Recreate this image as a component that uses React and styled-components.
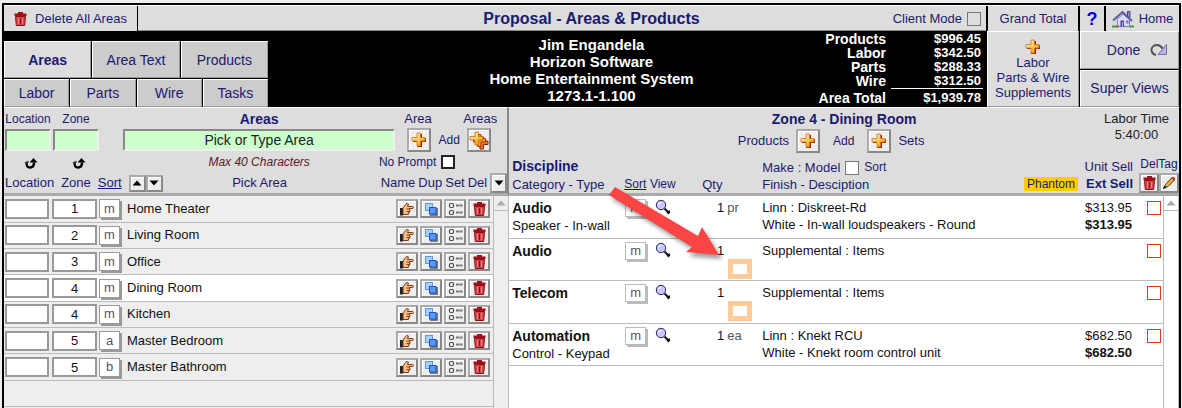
import React, { useState } from "react";
import styled, { createGlobalStyle, css } from "styled-components";

const areas = [
  { zone: "1", sort: "m", name: "Home Theater" },
  { zone: "2", sort: "m", name: "Living Room" },
  { zone: "3", sort: "m", name: "Office" },
  { zone: "4", sort: "m", name: "Dining Room", selected: true },
  { zone: "4", sort: "m", name: "Kitchen" },
  { zone: "5", sort: "a", name: "Master Bedroom" },
  { zone: "5", sort: "b", name: "Master Bathroom" },
];

const products = [
  { discipline: "Audio", category: "Speaker - In-wall", qty: "1", unit: "pr", make: "Linn : Diskreet-Rd", finish: "White - In-wall loudspeakers - Round", price: "$313.95" },
  { discipline: "Audio", qty: "1", make: "Supplemental : Items", supplement: true },
  { discipline: "Telecom", qty: "1", make: "Supplemental : Items", supplement: true },
  { discipline: "Automation", category: "Control - Keypad", qty: "1", unit: "ea", make: "Linn : Knekt RCU", finish: "White - Knekt room control unit", price: "$682.50" },
];

const totals = [
  ["Products", "$996.45"],
  ["Labor", "$342.50"],
  ["Parts", "$288.33"],
  ["Wire", "$312.50"],
];

/* ---------- icons ---------- */

const PlusIcon = () => (
  <svg width="16" height="16" viewBox="0 0 16 16" aria-hidden="true">
    <defs>
      <linearGradient id="gold" x1="0" y1="0" x2="1" y2="1">
        <stop offset="0.2" stopColor="#ffe9a0" />
        <stop offset="0.8" stopColor="#f5a800" />
      </linearGradient>
    </defs>
    <path d="M7 2h4v4h4v4h-4v5H6v-5H2V9h5z" fill="#a01c10" />
    <path d="M6 1h3.500v4.500H14V9H9.500v5H6V9H1V5.500h5z" fill="url(#gold)" stroke="#d0702c" strokeWidth="0.8" />
  </svg>
);

const PlusesIcon = () => (
  <svg width="20" height="19" viewBox="0 0 20 19" aria-hidden="true">
    <path d="M11 6h3.500v4H19v3.500h-4.500V18H11v-4.500H7V10h4z" fill="#e08020" stroke="#a01c10" />
    <path d="M8.500 3.500H12v4h4.500V11H12v4.500H8.500V11h-4V7.500h4z" fill="#f0a030" stroke="#b02c10" />
    <path d="M6 1h3.500v4.500H14V9H9.500v5H6V9H1V5.500h5z" fill="url(#gold)" stroke="#c8641e" strokeWidth="0.8" />
  </svg>
);

const TrashIcon = () => (
  <svg width="13" height="14" viewBox="0 0 13 14" aria-hidden="true">
    <path d="M4 0h5v1.500h3.500V4H.5V1.500H4z" fill="#a01018" />
    <path d="M1.500 4.500h10l-.8 9H2.300z" fill="#d2484c" stroke="#8e0c14" />
    <path d="M4.500 6v6M8.500 6v6" stroke="#e88080" />
    <path d="M6.500 6v6" stroke="#8e0c14" />
  </svg>
);

const HandIcon = () => (
  <svg width="14" height="14" viewBox="0 0 14 14" aria-hidden="true">
    <path d="M0 6h3v7.500H0z" fill="#222" />
    <path d="M3 6 6.500 1.500l2 .5L7.500 4.500h5.200c1 0 1 2 0 2H9.500V8h.5v1.500h-.8V11h-.8v1.500H3z" fill="#f6c08c" stroke="#7a3b14" />
    <path d="M6.500 7h3M6.500 9.500h2.500" stroke="#7a3b14" />
  </svg>
);

const CopyIcon = () => (
  <svg width="14" height="14" viewBox="0 0 14 14" aria-hidden="true">
    <rect x="1.500" y="1.500" width="7" height="7" fill="#a8d0fa" stroke="#5a9ae6" />
    <path d="M13 6v7H6" fill="none" stroke="#555" strokeWidth="1.500" />
    <rect x="5.500" y="5.500" width="6.500" height="6.500" fill="#5c98fc" stroke="#1d54c8" />
  </svg>
);

const SetIcon = () => (
  <svg width="15" height="14" viewBox="0 0 15 14" aria-hidden="true">
    <rect x="1.500" y="1.500" width="4" height="4" rx="1.500" fill="#fff" stroke="#444" strokeWidth="1.200" />
    <rect x="1.500" y="8.500" width="4" height="4" rx="1.500" fill="#fff" stroke="#444" strokeWidth="1.200" />
    <path d="M8 3.500h3m.5 0h3M8 10.500h3m.5 0h3" stroke="#777" strokeWidth="2" />
  </svg>
);

const SearchIcon = () => (
  <svg width="16" height="16" viewBox="0 0 16 16" aria-hidden="true">
    <path d="m9.500 9.500 4 4" stroke="#111" strokeWidth="2" />
    <path d="m11.500 13.500 3-2.500.8 2.500-2 2z" fill="#111" />
    <circle cx="6" cy="6" r="4.700" fill="#c8c8ff" stroke="#22224a" />
    <path d="M3.500 5.500q.5-1.800 2.500-2" fill="none" stroke="#fff" />
  </svg>
);

const HouseIcon = () => (
  <svg width="22" height="18" viewBox="0 0 22 18" aria-hidden="true">
    <path d="M15.500 1.500h2.500v6h-2.500z" fill="#8a8ac8" stroke="#444480" />
    <path d="M5 9.500 11 4l6.500 5.500v7H6z" fill="#dcdcff" stroke="#7a7ab8" />
    <path d="M1 10.500 10.500 2l9.500 9" fill="none" stroke="#5a5a98" strokeWidth="1.800" />
    <path d="M8.500 10.500H12V17H8.500z" fill="#4a4a98" />
    <path d="M10 12h1v5h-1z" fill="#b0b0e8" />
    <path d="M14 10.500h2.500v3H14z" fill="#7a7ad8" />
    <path d="M0 16.500h5M17.500 16.500H22" stroke="#3aa03a" strokeWidth="2" />
    <path d="M4.500 16.500h2" stroke="#d84020" strokeWidth="2" />
  </svg>
);

const DoneIcon = () => (
  <svg width="18" height="14" viewBox="0 0 18 14" aria-hidden="true">
    <path d="M6 12C1.500 11 .5 6.500 2.500 4s7-3.500 10.500 2" fill="none" stroke="#555" strokeWidth="2" />
    <path d="M16.500 1.500v10H8z" fill="#b4b4f0" stroke="#7070a0" />
  </svg>
);

const PencilIcon = () => (
  <svg width="14" height="14" viewBox="0 0 14 14" aria-hidden="true">
    <path d="m2.500 11.500 1-3L10 1.500l2.500 2.500L6 10.500z" fill="#f0b440" stroke="#4a2c10" />
    <path d="m9.500 2 1-1q1-.5 2 .5t.5 2l-1 1z" fill="#c03c30" />
    <path d="m1 13 1-3.500 2.500 2.500z" fill="#111" />
  </svg>
);

const TurnIcon = () => (
  <svg width="14" height="12" viewBox="0 0 14 12" aria-hidden="true">
    <path d="M2.500 4.500c0 4 1 5 3.500 5s4-1 4-5" fill="none" stroke="#000" strokeWidth="2.500" />
    <path d="M5.500 4.500 9.500 0l4 4.500z" fill="#000" />
    <path d="M0 4.500h4.500V3z" fill="#000" />
  </svg>
);

const Triangle = ({ down, color = "#000" }) => (
  <svg width="10" height="6" viewBox="0 0 10 6" aria-hidden="true">
    <path d={down ? "M.5.500h9L5 5.500z" : "M.5 5.500h9L5 .5z"} fill={color} />
  </svg>
);

/* ---------- styles ---------- */

const GlobalStyle = createGlobalStyle`
  * { box-sizing: border-box; }
  body {
    margin: 0;
    background: #eee;
    color: #111;
    font: 13px/16px "Liberation Sans", Arial, sans-serif;
  }
  button, input { font: inherit; color: inherit; margin: 0; padding: 0; border-radius: 0; }
`;

const bevel = css`
  border: 1px solid;
  border-color: #fff #999 #999 #fff;
`;

const Page = styled.div`
  display: flex;
  flex-direction: column;
  min-height: 100vh;
  margin: 0 1px 0 2px;
  padding-top: 3px;
`;

const Frame = styled.main`
  flex: 1;
  display: flex;
  flex-direction: column;
  border: 2px solid #000;
  border-bottom: 0;
  color: #1a1a70;
`;

const TopBar = styled.header`
  display: grid;
  grid-template-columns: 1fr auto 1fr;
  height: 26px;
  background: #ddd;
  border-top: 1px solid #fff;
  border-bottom: 1px solid #888;
`;

const Title = styled.h1`
  margin: 0;
  font-size: 16px;
  line-height: 26px;
`;

const Side = styled.div`
  display: flex;
  justify-content: ${(p) => (p.$end ? "flex-end" : "flex-start")};
`;

const BarButton = styled.button`
  display: flex;
  align-items: center;
  justify-content: center;
  gap: ${(p) => p.$gap || "8px"};
  width: ${(p) => p.$width};
  background: #ddd;
  border: 0;
  border-right: ${(p) => (p.$first ? "1px solid #000" : "0")};
  border-left: ${(p) => (p.$first ? "0" : "2px solid #000")};
  font-size: ${(p) => p.$size || "13px"};
  font-weight: ${(p) => p.$weight || 400};
  color: ${(p) => p.$color || "inherit"};
`;

const Check = styled.input.attrs({ type: "checkbox" })`
  appearance: none;
  flex: none;
  width: 14px;
  height: 14px;
  border: ${(p) => p.$border || "1px solid #777"};
  background: ${(p) => p.$fill || "#fff"};
  &:checked { background: #1a1a70; }
`;

const CheckLabel = styled.label`
  display: flex;
  align-items: center;
  gap: 5px;
  margin-right: ${(p) => p.$space || "0"};
  white-space: nowrap;
`;

const Banner = styled.section`
  display: grid;
  grid-template-columns: 1fr auto 1fr;
  height: 76px;
  background: #000;
  color: #fff;
  font-weight: 700;
`;

const Tabs = styled.nav`
  width: 264px;
  padding-top: 10px;
  display: grid;
  grid-template-rows: 37px 28px;
  gap: 1px;
`;

const TabRow = styled.div`
  display: flex;
  gap: 1px;
`;

const Tab = styled.button`
  ${bevel}
  flex: 1;
  background: ${(p) => (p.$active ? "#ddd" : "#ccc")};
  color: #1a1a70;
  font-size: 14px;
  font-weight: ${(p) => (p.$active ? 700 : 400)};
`;

const Client = styled.div`
  padding-top: 5px;
  text-align: center;
  font-size: 15px;
  line-height: 17px;
`;

const Totals = styled.table`
  align-self: flex-start;
  margin-right: 4px;
  border-collapse: collapse;
  font-size: 14px;
  line-height: 14px;
  text-align: right;
  th, td { padding: 0; }
  td { width: 92px; padding-right: 2px; font-size: 13px; }
  th { padding-right: 5px; }
  tbody tr:first-child > * { padding-top: 1px; }
  tfoot th { padding-top: 2px; }
  tfoot td { padding-top: 2px; border-top: 1px solid #fff; }
`;

const Supplements = styled.button`
  ${bevel}
  display: flex;
  flex-direction: column;
  align-items: center;
  justify-content: center;
  width: 92px;
  background: #ddd;
  color: #1a1a70;
  font-weight: 400;
  line-height: 15px;
`;

const NavStack = styled.div`
  display: grid;
  grid-template-rows: 1fr 1fr;
  gap: 1px;
  width: 100px;
  padding-left: 1px;
`;

const NavButton = styled.button`
  ${bevel}
  display: flex;
  align-items: center;
  justify-content: center;
  gap: 10px;
  padding-left: ${(p) => (p.$icon ? "16px" : "0")};
  background: #ddd;
  color: #1a1a70;
  font-size: 14px;
  font-weight: 400;
`;

const Columns = styled.div`
  flex: 1;
  display: grid;
  grid-template-columns: 43fr 57fr;
`;

const Panel = styled.section`
  position: relative;
  display: flex;
  flex-direction: column;
  min-width: 0;
  background: ${(p) => p.$fill};
`;

const PanelHead = styled.div`
  height: 89px;
  background: #ddd;
  border-top: 1px solid #fff;
  border-bottom: 3px solid #aaa;
  border-right: ${(p) => (p.$divided ? "2px solid #888" : "0")};
  display: flex;
  flex-direction: column;
  justify-content: space-between;
`;

const HeadRow = styled.div`
  display: flex;
  align-items: center;
  height: ${(p) => p.$height};
  padding-left: 1px;
`;

const HeadStart = styled.div`
  display: flex;
  align-items: center;
  gap: ${(p) => p.$gap || "2px"};
  width: ${(p) => p.$width || "118px"};
`;

const HeadMiddle = styled.div`
  flex: 1;
  text-align: center;
  white-space: nowrap;
`;

const HeadEnd = styled.div`
  display: flex;
  align-items: center;
  justify-content: ${(p) => p.$justify || "space-between"};
  gap: ${(p) => p.$gap || "0"};
  width: ${(p) => p.$width || "112px"};
  padding: ${(p) => p.$pad || "0 16px 0 12px"};
`;

const Slot = styled.span`
  width: 46px;
  display: flex;
  justify-content: center;
  padding: 4px 0 0 6px;
`;

const SlotLabel = styled.label`
  width: 46px;
  text-align: center;
  font-size: 12px;
`;

const Strong = styled.h2`
  margin: 0;
  font-size: 14px;
  line-height: 18px;
`;

const Small = styled.span`
  font-size: 12px;
`;

const Hint = styled.em`
  font-size: 12px;
  color: #5a2020;
`;

const GreenInput = styled.input`
  width: ${(p) => p.$width || "100%"};
  height: 22px;
  border: 2px solid;
  border-color: #888 #eee #eee #888;
  background: #cfc;
  color: #111;
  text-align: center;
  font-size: 14px;
  &::placeholder { color: #222; opacity: 1; }
`;

const IconButton = styled.button`
  display: flex;
  flex: none;
  align-items: center;
  justify-content: center;
  width: ${(p) => p.$width || "24px"};
  height: ${(p) => p.$height || "24px"};
  background: #eee;
  border: 2px solid;
  border-color: #aaa #888 #888 #aaa;
  box-shadow: inset 1px 1px #fff;
`;

const SortLink = styled.a`
  color: inherit;
  font-size: ${(p) => (p.$small ? "12px" : "13px")};
  text-decoration: underline;
`;

const Buttons = styled.div`
  display: flex;
  gap: ${(p) => p.$gap || "0"};
`;

const ListBody = styled.div`
  flex: 1;
  display: flex;
`;

const Scroller = styled.div`
  flex: 1;
  min-width: 0;
`;

const ScrollBar = styled.div`
  width: 16px;
  border: 1px solid #bbb;
  border-width: 0 1px;
  background: ${(p) => p.$fill};
`;

const ScrollButton = styled.button`
  display: flex;
  align-items: center;
  justify-content: center;
  width: 100%;
  height: 15px;
  background: none;
  border: 0;
  border-bottom: 1px solid #bbb;
`;

const DataTable = styled.table`
  width: 100%;
  height: ${(p) => p.$height};
  border-collapse: collapse;
  table-layout: fixed;
  color: #111;
  td { padding: 0; white-space: nowrap; }
`;

const AreaRow = styled.tr`
  height: 26px;
  background: ${(p) => (p.$selected ? "#fff" : "#eee")};
  border-bottom: 1px solid #bbb;
`;

const RowInput = styled.input`
  display: block;
  width: ${(p) => p.$width};
  height: 20px;
  margin-left: 1px;
  border: 2px solid #999;
  background: #fff;
  text-align: center;
`;

const SortButton = styled.button`
  display: block;
  width: 21px;
  height: ${(p) => (p.$pale ? "18px" : "19px")};
  background: #fff;
  border: 1px solid ${(p) => (p.$pale ? "#bbb" : "#999")};
  box-shadow: 2px 2px ${(p) => (p.$pale ? "#bbb" : "#999")};
  color: #555;
  line-height: 14px;
`;

const HeadGrid = styled.div`
  display: grid;
  grid-template-columns: 1fr auto 1fr;
`;

const AddRow = styled.div`
  display: flex;
  align-items: center;
  gap: 7px;
  margin: 1px 26px 0 0;
`;

const AddText = styled(Small)`
  margin: 0 6px;
`;

const Center = styled.div`
  grid-column: 2;
  display: flex;
  flex-direction: column;
  align-items: center;
  padding-top: 2px;
`;

const LaborTime = styled.div`
  justify-self: end;
  padding: 3px 10px 0 0;
  color: #222;
  text-align: center;
`;

const ProductHead = styled.div`
  display: flex;
  align-items: flex-end;
  line-height: 17px;
  padding-left: 3px;
`;

const ProductCol = styled.div`
  flex: ${(p) => (p.$width ? "none" : 1)};
  width: ${(p) => p.$width || "auto"};
  text-align: ${(p) => p.$align || "left"};
  white-space: nowrap;
`;

const Discipline = styled.div`
  height: 18px;
  font-size: 14px;
  font-weight: 700;
`;

const Phantom = styled.span`
  padding: 0 3px;
  margin-right: 8px;
  background: #fc0;
  font-size: 12px;
`;

const TagTools = styled.div`
  display: flex;
  flex-direction: column;
  align-items: center;
  width: 40px;
  margin-left: 6px;
`;

const ProductRow = styled.tr`
  height: 42px;
  border-bottom: 1px solid #bbb;
  line-height: 18px;
  td { vertical-align: top; padding-top: 3px; }
  td:first-child { padding-left: 3px; }
`;

const Line = styled.div`
  height: 17px;
`;

const Qty = styled.span`
  display: inline-block;
  width: 41px;
  text-align: right;
`;

const Unit = styled.span`
  margin-left: 3px;
  color: #555;
`;

const SupplementCheck = styled(Check)`
  display: block;
  width: 24px;
  height: 20px;
  margin-left: 45px;
  border: 5px solid #fc9;
`;

const Price = styled.td`
  text-align: right;
`;

const TagCheck = styled(Check)`
  display: block;
  margin: 2px 2px 0 auto;
  border: 1px solid #d04010;
`;

const PointerArrow = styled.svg`
  position: absolute;
  left: 94px;
  top: 72px;
  pointer-events: none;
  filter: drop-shadow(3px 4px 2px rgba(0, 0, 0, 0.4));
`;

/* ---------- page parts ---------- */

const Head = () => (
  <>
    <TopBar>
      <Side>
        <BarButton $first $width="134px">
          <TrashIcon /> Delete All Areas
        </BarButton>
      </Side>
      <Title>Proposal - Areas &amp; Products</Title>
      <Side $end>
        <CheckLabel $space="5px">
          Client Mode <Check $fill="#ddd" />
        </CheckLabel>
        <BarButton $width="92px">Grand Total</BarButton>
        <BarButton $width="26px" $size="18px" $weight="700" $color="#0000e0">?</BarButton>
        <BarButton $width="75px" $gap="5px">
          <HouseIcon /> Home
        </BarButton>
      </Side>
    </TopBar>
    <Banner>
      <Tabs>
        <TabRow>
          <Tab $active>Areas</Tab>
          <Tab>Area Text</Tab>
          <Tab>Products</Tab>
        </TabRow>
        <TabRow>
          <Tab>Labor</Tab>
          <Tab>Parts</Tab>
          <Tab>Wire</Tab>
          <Tab>Tasks</Tab>
        </TabRow>
      </Tabs>
      <Client>
        Jim Engandela<br />
        Horizon Software<br />
        Home Entertainment System<br />
        1273.1-1.100
      </Client>
      <Side $end>
        <Totals>
          <tbody>
            {totals.map(([label, value]) => (
              <tr key={label}>
                <th scope="row">{label}</th>
                <td>{value}</td>
              </tr>
            ))}
          </tbody>
          <tfoot>
            <tr>
              <th scope="row">Area Total</th>
              <td>$1,939.78</td>
            </tr>
          </tfoot>
        </Totals>
        <Supplements>
          <PlusIcon />
          <span>Labor<br />Parts &amp; Wire<br />Supplements</span>
        </Supplements>
        <NavStack>
          <NavButton $icon>Done <DoneIcon /></NavButton>
          <NavButton>Super Views</NavButton>
        </NavStack>
      </Side>
    </Banner>
  </>
);

const ScrollTrack = ({ fill }) => (
  <ScrollBar $fill={fill}>
    <ScrollButton aria-label="Scroll up"><Triangle color="#aaa" /></ScrollButton>
  </ScrollBar>
);

function AreasPanel() {
  const [area, setArea] = useState("");

  return (
    <Panel $fill="#eee">
      <PanelHead $divided>
        <HeadRow $height="21px">
          <HeadStart>
            <SlotLabel htmlFor="location">Location</SlotLabel>
            <SlotLabel htmlFor="zone">Zone</SlotLabel>
          </HeadStart>
          <HeadMiddle><Strong>Areas</Strong></HeadMiddle>
          <HeadEnd $pad="0 10px 0 9px"><span>Area</span><span>Areas</span></HeadEnd>
        </HeadRow>
        <HeadRow $height="22px">
          <HeadStart>
            <GreenInput id="location" $width="46px" />
            <GreenInput id="zone" $width="46px" />
          </HeadStart>
          <HeadMiddle>
            <GreenInput
              aria-label="Area"
              placeholder="Pick or Type Area"
              value={area}
              onChange={(e) => setArea(e.target.value)}
            />
          </HeadMiddle>
          <HeadEnd>
            <IconButton aria-label="Add area"><PlusIcon /></IconButton>
            <Small>Add</Small>
            <IconButton aria-label="Add areas"><PlusesIcon /></IconButton>
          </HeadEnd>
        </HeadRow>
        <HeadRow $height="22px">
          <HeadStart>
            <Slot><TurnIcon /></Slot>
            <Slot><TurnIcon /></Slot>
          </HeadStart>
          <HeadMiddle><Hint>Max 40 Characters</Hint></HeadMiddle>
          <HeadEnd $justify="flex-end" $pad="0 52px 0 0">
            <CheckLabel><Small>No Prompt</Small> <Check $border="2px solid #222" /></CheckLabel>
          </HeadEnd>
        </HeadRow>
        <HeadRow $height="20px">
          <HeadStart $width="158px" $gap="7px">
            <span>Location</span>
            <span>Zone</span>
            <SortLink href="#sort">Sort</SortLink>
            <Buttons>
              <IconButton $width="17px" $height="17px" aria-label="Sort ascending"><Triangle /></IconButton>
              <IconButton $width="17px" $height="17px" aria-label="Sort descending"><Triangle down /></IconButton>
            </Buttons>
          </HeadStart>
          <HeadMiddle>Pick Area</HeadMiddle>
          <HeadEnd $width="151px" $justify="flex-end" $gap="3px" $pad="0">
            <span>Name</span><span>Dup</span><span>Set</span><span>Del</span>
            <IconButton $width="17px" $height="20px" aria-label="More"><Triangle down /></IconButton>
          </HeadEnd>
        </HeadRow>
      </PanelHead>
      <ListBody>
        <Scroller>
          <DataTable $height="211px">
            <colgroup>
              <col width="47" />
              <col width="48" />
              <col width="28" />
              <col />
              <col width="97" />
            </colgroup>
            <tbody>
              {areas.map((a) => (
                <AreaRow key={a.name} $selected={a.selected}>
                  <td><RowInput $width="44px" aria-label={`${a.name} location`} /></td>
                  <td><RowInput $width="45px" defaultValue={a.zone} aria-label={`${a.name} zone`} /></td>
                  <td><SortButton>{a.sort}</SortButton></td>
                  <td>{a.name}</td>
                  <td>
                    <Buttons $gap="2px">
                      <IconButton $width="22px" $height="19px" aria-label="Name"><HandIcon /></IconButton>
                      <IconButton $width="22px" $height="19px" aria-label="Duplicate"><CopyIcon /></IconButton>
                      <IconButton $width="22px" $height="19px" aria-label="Set"><SetIcon /></IconButton>
                      <IconButton $width="22px" $height="19px" aria-label="Delete"><TrashIcon /></IconButton>
                    </Buttons>
                  </td>
                </AreaRow>
              ))}
              <AreaRow><td colSpan="5" /></AreaRow>
            </tbody>
          </DataTable>
        </Scroller>
        <ScrollTrack fill="#eee" />
      </ListBody>
    </Panel>
  );
}

const ProductsPanel = () => (
  <Panel $fill="#fff">
    <PanelHead>
      <HeadGrid>
        <Center>
          <Strong>Zone 4 - Dining Room</Strong>
          <AddRow>
            Products
            <IconButton aria-label="Add products"><PlusIcon /></IconButton>
            <AddText>Add</AddText>
            <IconButton aria-label="Add sets"><PlusIcon /></IconButton>
            Sets
          </AddRow>
        </Center>
        <LaborTime>Labor Time<br />5:40:00</LaborTime>
      </HeadGrid>
      <ProductHead>
        <ProductCol $width="112px"><Discipline>Discipline</Discipline>Category - Type</ProductCol>
        <ProductCol $width="78px"><SortLink $small href="#sort-products">Sort</SortLink> <Small>View</Small></ProductCol>
        <ProductCol $width="60px">Qty</ProductCol>
        <ProductCol>
          <CheckLabel>Make : Model <Check /> <Small>Sort</Small></CheckLabel>
          Finish - Desciption
        </ProductCol>
        <ProductCol $align="right">Unit Sell<br /><Phantom>Phantom</Phantom><b>Ext Sell</b></ProductCol>
        <TagTools>
          <Small>DelTag</Small>
          <Buttons>
            <IconButton $width="20px" $height="20px" aria-label="Delete"><TrashIcon /></IconButton>
            <IconButton $width="20px" $height="20px" aria-label="Tag"><PencilIcon /></IconButton>
          </Buttons>
        </TagTools>
      </ProductHead>
    </PanelHead>
    <ListBody>
      <Scroller>
        <DataTable $height="170px">
          <colgroup>
            <col width="116" />
            <col width="30" />
            <col width="28" />
            <col width="79" />
            <col />
            <col width="80" />
            <col width="31" />
          </colgroup>
          <tbody>
            {products.map((p, i) => (
              <ProductRow key={i}>
                <td><Discipline>{p.discipline}</Discipline>{p.category}</td>
                <td><SortButton $pale>m</SortButton></td>
                <td><SearchIcon /></td>
                <td>
                  <Line><Qty>{p.qty}</Qty><Unit>{p.unit}</Unit></Line>
                  {p.supplement && <SupplementCheck aria-label="Supplement" />}
                </td>
                <td><Line>{p.make}</Line>{p.finish}</td>
                <Price><Line>{p.price}</Line><b>{p.price}</b></Price>
                <td><TagCheck aria-label="Tag item" /></td>
              </ProductRow>
            ))}
          </tbody>
        </DataTable>
      </Scroller>
      <ScrollTrack fill="#fff" />
    </ListBody>
    <PointerArrow width="130" height="90" viewBox="603 179 130 90" aria-hidden="true">
      <path d="M615 187 698 236 702 227 719 255 686 252 692 247 609 195z" fill="#fb4444" />
    </PointerArrow>
  </Panel>
);

function App() {
  return (
    <Page>
      <GlobalStyle />
      <Frame>
        <Head />
        <Columns>
          <AreasPanel />
          <ProductsPanel />
        </Columns>
      </Frame>
    </Page>
  );
}

export default App;
